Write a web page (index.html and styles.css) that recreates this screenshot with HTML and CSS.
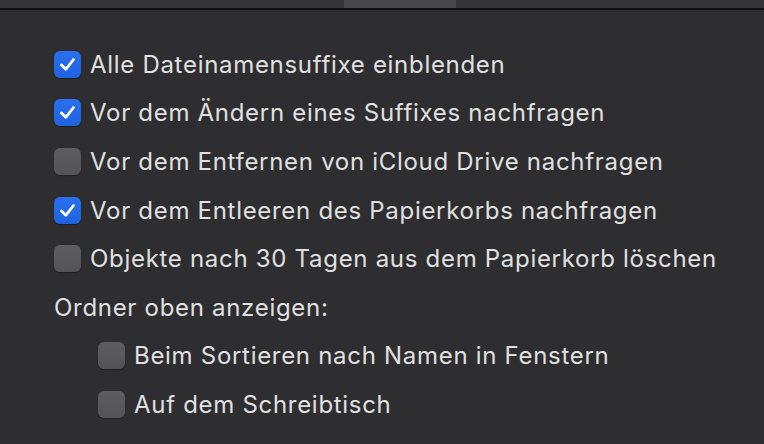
FILE: index.html
```html
<!DOCTYPE html>
<html lang="de">
<head>
    <meta charset="UTF-8">
    <meta name="viewport" content="width=device-width, initial-scale=1.0">
    <title>Finder Einstellungen - Erweitert</title>
    <link rel="stylesheet" href="styles.css">
</head>
<body>
    <div class="toolbar">
        <div class="tab-active"></div>
    </div>

    <main class="prefs">
        <label class="option">
            <span class="box checked"><svg viewBox="0 0 27 27"><path d="M7.5 14 L11.8 18.3 L19.5 8.5"/></svg></span>
            <span class="text">Alle Dateinamensuffixe einblenden</span>
        </label>
        <label class="option">
            <span class="box checked"><svg viewBox="0 0 27 27"><path d="M7.5 14 L11.8 18.3 L19.5 8.5"/></svg></span>
            <span class="text">Vor dem Ändern eines Suffixes nachfragen</span>
        </label>
        <label class="option">
            <span class="box"></span>
            <span class="text">Vor dem Entfernen von iCloud Drive nachfragen</span>
        </label>
        <label class="option">
            <span class="box checked"><svg viewBox="0 0 27 27"><path d="M7.5 14 L11.8 18.3 L19.5 8.5"/></svg></span>
            <span class="text">Vor dem Entleeren des Papierkorbs nachfragen</span>
        </label>
        <label class="option">
            <span class="box"></span>
            <span class="text">Objekte nach 30 Tagen aus dem Papierkorb löschen</span>
        </label>

        <div class="group-title">Ordner oben anzeigen:</div>

        <label class="option nested">
            <span class="box"></span>
            <span class="text">Beim Sortieren nach Namen in Fenstern</span>
        </label>
        <label class="option nested">
            <span class="box"></span>
            <span class="text">Auf dem Schreibtisch</span>
        </label>
    </main>
</body>
</html>
```

FILE: styles.css
```css
body {
    margin: 0;
    padding: 0;
    background-color: #2e2e30;
    font-family: Inter, "Noto Sans", sans-serif;
    color: #e0e0e0;
    height: 444px;
    overflow: hidden;
}
.toolbar {
    height: 8px;
    background-color: #353537;
    border-bottom: 2px solid #111112;
    position: relative;
}
.tab-active {
    position: absolute;
    left: 344px;
    width: 112px;
    top: 0;
    bottom: 0;
    background-color: #48484a;
}
.prefs {
    display: flex;
    flex-direction: column;
    padding: 30px 0 0 54px;
}
.option {
    display: flex;
    align-items: center;
    height: 48.6px;
    gap: 9px;
}
.option.nested {
    padding-left: 44px;
}
.box {
    width: 27px;
    height: 27px;
    border-radius: 6px;
    box-sizing: border-box;
    background: linear-gradient(#5d5d5f, #545456);
    box-shadow: 0 1px 1px rgba(0,0,0,0.35);
    flex: none;
    display: flex;
}
.box.checked {
    background: linear-gradient(#2a6ff0, #1f63e0);
}
.box svg {
    width: 27px;
    height: 27px;
}
.box path {
    fill: none;
    stroke: #fff;
    stroke-width: 2.8;
    stroke-linecap: round;
    stroke-linejoin: round;
}
.text {
    font-size: 24px;
    letter-spacing: 0.7px;
}
.group-title {
    font-size: 24px;
    letter-spacing: 0.7px;
    height: 48.6px;
    display: flex;
    align-items: center;
}
```
